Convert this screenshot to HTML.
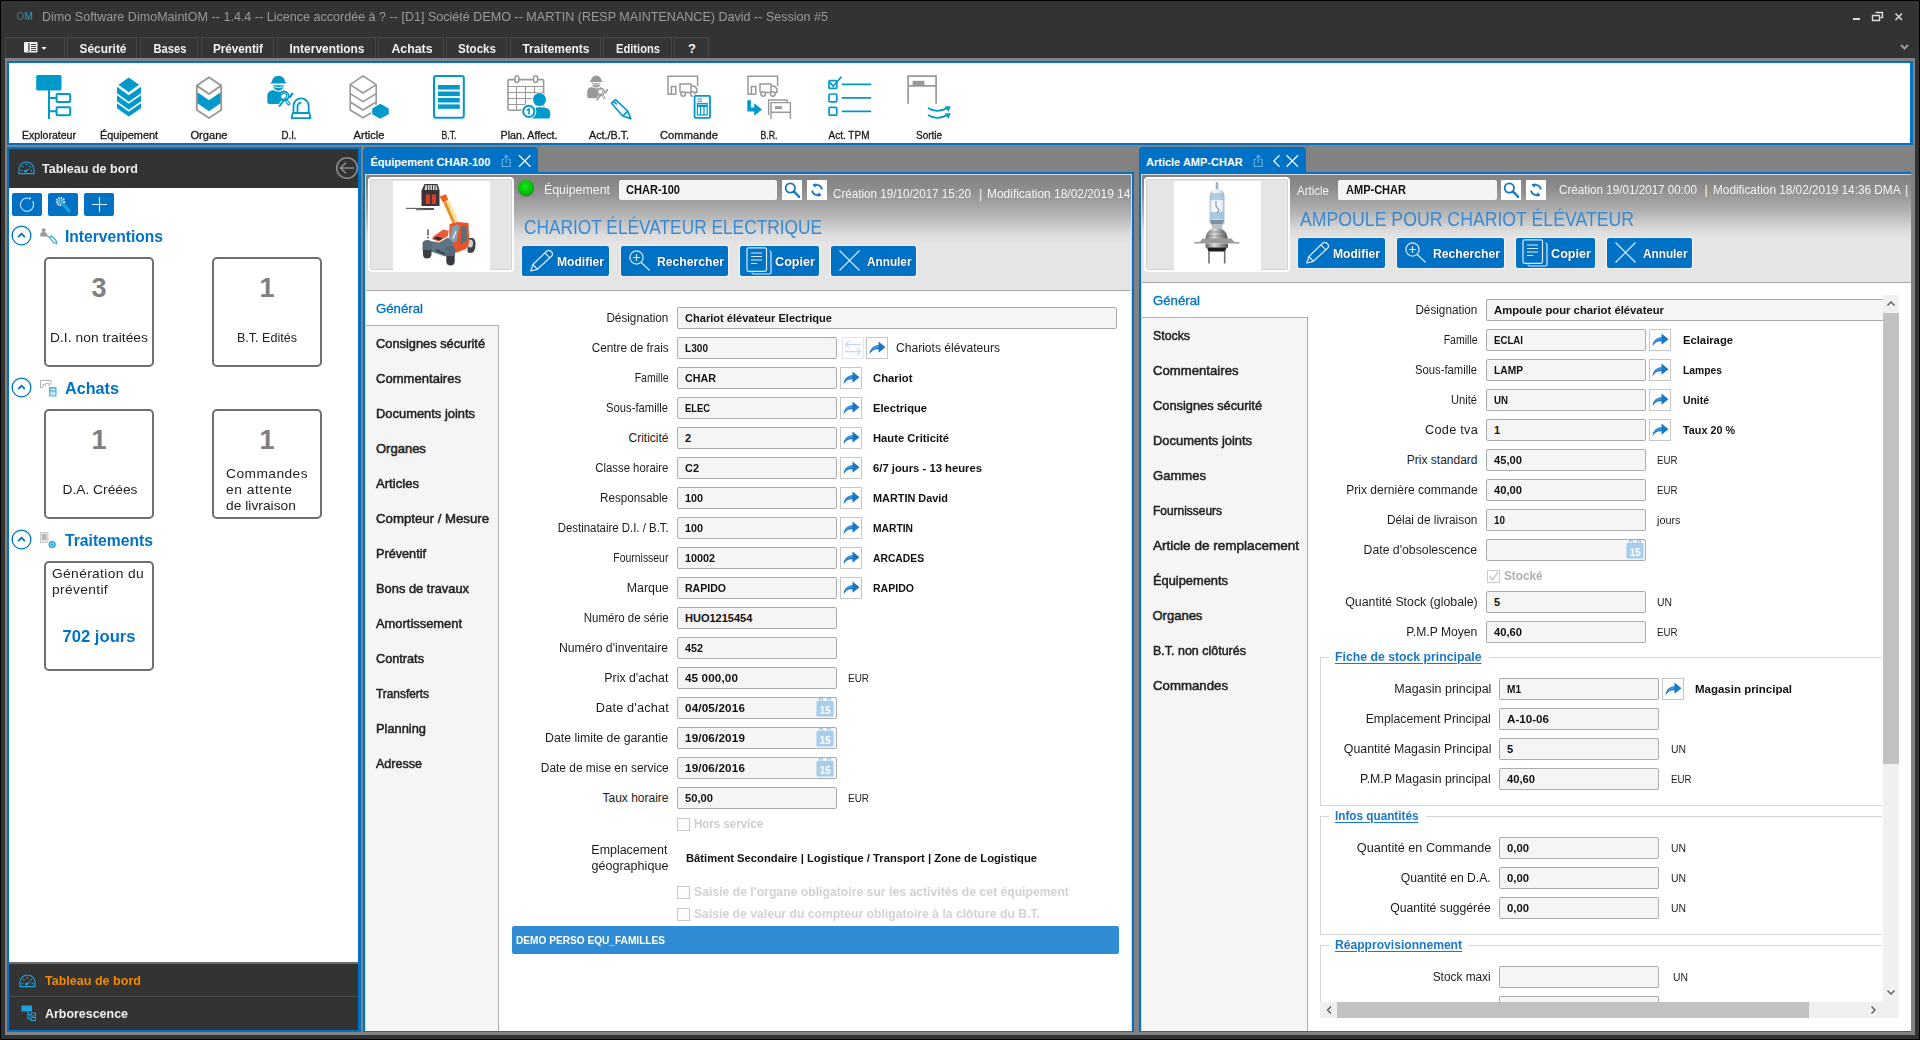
<!DOCTYPE html>
<html lang="fr"><head><meta charset="utf-8"><title>Dimo Software DimoMaintOM</title>
<style>
html,body{margin:0;padding:0;}
body{width:1920px;height:1040px;overflow:hidden;background:#333;position:relative;font-family:"Liberation Sans",sans-serif;}
div{position:absolute;box-sizing:border-box;}
svg{position:absolute;overflow:visible;}
.t{white-space:nowrap;}

.b{background:#0072c6;}

.hdr{background:linear-gradient(#828282 0,#8c8c8c 12%,#b4b4b4 35%,#dcdcdc 52%,#e5e5e5 60%,#e5e5e5 100%);border-bottom:1px solid #a8a8a8;}
.in{background:#f5f5f5;border:1px solid #ababab;border-radius:2px;}
.ab{background:#fff;border:1px solid #c6c6c6;}
.btn{background:#0072c6;border-radius:2px;box-shadow:0 0 0 1px rgba(255,255,255,.55);}
.nav{background:#f5f5f5;border-right:1px solid #ababab;border-top:1px solid #b4b4b4;}

</style></head><body>
<div style="left:0px;top:0px;width:1920px;height:1040px;border:1px solid #000;"></div>
<div class="t" style="left:16.5px;top:10px;font-size:10px;line-height:14px;letter-spacing:0.2px;"><span style="color:#5a6b75">O</span><span style="color:#1aa3c9">M</span></div>
<div class="t" style="top:6.5px;font-size:13px;line-height:19px;color:#9a9a9a;left:42px;transform:scaleX(0.966);transform-origin:0 50%;">Dimo Software DimoMaintOM -- 1.4.4 -- Licence accordée à ? -- [D1] Société DEMO -- MARTIN (RESP MAINTENANCE) David -- Session #5</div>
<svg style="left:1850px;top:8px" width="60" height="18"><rect x="3" y="10" width="7" height="2" fill="#ddd"/><path d="M25.5 4.5h7v5h-2M22.5 7.5h7v5h-7z" fill="none" stroke="#ddd" stroke-width="1.4"/><path d="M45.5 5.5l6.5 6.5M52 5.5l-6.5 6.5" stroke="#ddd" stroke-width="1.5" fill="none"/></svg>
<svg style="left:1900px;top:43px" width="10" height="8"><path d="M1 2l3.5 3.5L8 2" stroke="#999" stroke-width="2" fill="none"/></svg>
<div style="left:5px;top:37px;width:60px;height:23px;background:#353535;border:1px solid #484848;border-bottom:none;"></div>
<div style="left:67px;top:37px;width:70px;height:23px;background:#353535;border:1px solid #484848;border-bottom:none;"></div>
<div class="t" style="top:38.5px;font-size:13px;line-height:19px;color:#f2f2f2;font-weight:bold;left:-397.5px;width:1000px;text-align:center;transform:scaleX(0.916);transform-origin:50% 50%;">Sécurité</div>
<div style="left:140px;top:37px;width:58px;height:23px;background:#353535;border:1px solid #484848;border-bottom:none;"></div>
<div class="t" style="top:38.5px;font-size:13px;line-height:19px;color:#f2f2f2;font-weight:bold;left:-330.5px;width:1000px;text-align:center;transform:scaleX(0.861);transform-origin:50% 50%;">Bases</div>
<div style="left:201px;top:37px;width:73px;height:23px;background:#353535;border:1px solid #484848;border-bottom:none;"></div>
<div class="t" style="top:38.5px;font-size:13px;line-height:19px;color:#f2f2f2;font-weight:bold;left:-262.0px;width:1000px;text-align:center;transform:scaleX(0.899);transform-origin:50% 50%;">Préventif</div>
<div style="left:277px;top:37px;width:99px;height:23px;background:#353535;border:1px solid #484848;border-bottom:none;"></div>
<div class="t" style="top:38.5px;font-size:13px;line-height:19px;color:#f2f2f2;font-weight:bold;left:-173.0px;width:1000px;text-align:center;transform:scaleX(0.919);transform-origin:50% 50%;">Interventions</div>
<div style="left:378px;top:37px;width:66px;height:23px;background:#353535;border:1px solid #484848;border-bottom:none;"></div>
<div class="t" style="top:38.5px;font-size:13px;line-height:19px;color:#f2f2f2;font-weight:bold;left:-88.5px;width:1000px;text-align:center;transform:scaleX(0.946);transform-origin:50% 50%;">Achats</div>
<div style="left:446px;top:37px;width:61px;height:23px;background:#353535;border:1px solid #484848;border-bottom:none;"></div>
<div class="t" style="top:38.5px;font-size:13px;line-height:19px;color:#f2f2f2;font-weight:bold;left:-23.0px;width:1000px;text-align:center;transform:scaleX(0.891);transform-origin:50% 50%;">Stocks</div>
<div style="left:510px;top:37px;width:91px;height:23px;background:#353535;border:1px solid #484848;border-bottom:none;"></div>
<div class="t" style="top:38.5px;font-size:13px;line-height:19px;color:#f2f2f2;font-weight:bold;left:56.0px;width:1000px;text-align:center;transform:scaleX(0.918);transform-origin:50% 50%;">Traitements</div>
<div style="left:603px;top:37px;width:69px;height:23px;background:#353535;border:1px solid #484848;border-bottom:none;"></div>
<div class="t" style="top:38.5px;font-size:13px;line-height:19px;color:#f2f2f2;font-weight:bold;left:138.0px;width:1000px;text-align:center;transform:scaleX(0.858);transform-origin:50% 50%;">Editions</div>
<div style="left:674px;top:37px;width:35px;height:23px;background:#353535;border:1px solid #484848;border-bottom:none;"></div>
<div class="t" style="top:38.5px;font-size:13px;line-height:19px;color:#f2f2f2;font-weight:bold;left:192.0px;width:1000px;text-align:center;">?</div>
<svg style="left:23px;top:41px" width="26" height="14"><rect x="1" y="1" width="13.5" height="10.5" rx="1" fill="#f4f4f4"/><rect x="5.3" y="2" width="1.2" height="8.5" fill="#333"/><path d="M8 3.5h5M8 5.5h5M8 7.5h5M8 9.5h5" stroke="#333" stroke-width="0.9"/><path d="M18.5 6h5l-2.5 3z" fill="#f4f4f4"/></svg>
<div style="left:5px;top:58px;width:1910px;height:89px;background:#828282;"></div>
<div style="left:7px;top:61px;width:1906px;height:84px;background:#0072c6;"></div>
<div style="left:9px;top:63px;width:1901px;height:80px;background:#fff;"></div>
<div style="left:7px;top:147px;width:354px;height:885px;background:#0072c6;"></div>
<div style="left:9px;top:149px;width:349px;height:881px;background:#fff;"></div>
<div style="left:9px;top:149px;width:349px;height:39px;background:#333;"></div>
<div style="left:9px;top:962px;width:349px;height:68px;background:#333;"></div>
<div style="left:9px;top:962px;width:349px;height:1.5px;background:#6a6a6a;"></div>
<div style="left:9px;top:996px;width:349px;height:1px;background:#505050;"></div>
<div style="left:5px;top:147px;width:2px;height:887px;background:#828282;"></div>
<div style="left:361px;top:147px;width:2px;height:887px;background:#828282;"></div>
<div style="left:5px;top:1032px;width:1910px;height:2.5px;background:#828282;"></div>
<div style="left:1134px;top:147px;width:5px;height:887px;background:#828282;"></div>
<div style="left:1911px;top:147px;width:4px;height:887px;background:#828282;"></div>
<div style="left:363px;top:147px;width:771px;height:26px;background:#828282;"></div>
<div style="left:1139px;top:147px;width:772px;height:26px;background:#828282;"></div>
<div style="left:363px;top:172px;width:771px;height:860px;background:#0072c6;"></div>
<div style="left:363px;top:147px;width:175px;height:27px;background:#0072c6;border-radius:4px 4px 0 0;"></div>
<div style="left:365px;top:174px;width:767px;height:857px;background:#fff;border:1px solid #dcdcdc;border-bottom:none;"></div>
<div style="left:1139px;top:172px;width:772px;height:860px;background:#0072c6;"></div>
<div style="left:1139px;top:147px;width:167px;height:27px;background:#0072c6;border-radius:4px 4px 0 0;"></div>
<div style="left:1141px;top:174px;width:770px;height:857px;background:#fff;border:1px solid #dcdcdc;border-bottom:none;border-right:none;"></div>
<svg style="left:27px;top:75px" width="44" height="44" viewBox="0 0 44 44"><rect x="9.2" y="0" width="25.3" height="15.6" rx="1.5" fill="#0099cc"/><path d="M22 15v29M22 23h7M22 36.2h7" stroke="#0099cc" stroke-width="2" fill="none"/><rect x="29.6" y="19" width="13.6" height="8" rx="1" fill="none" stroke="#0099cc" stroke-width="2"/><rect x="29.6" y="32.2" width="13.6" height="8" rx="1" fill="none" stroke="#0099cc" stroke-width="2"/></svg>
<svg style="left:107px;top:75px" width="44" height="44" viewBox="0 0 44 44"><g fill="#0099cc"><path d="M21.75 2.5L32 9.8 21.75 17.2 11.5 9.8z"/><path d="M10 11.8L21.75 20.3 34 11.8V18.3L21.75 26.8 10 18.3z"/><path d="M10 20.3L21.75 28.8 34 20.3V26.3L21.75 34.8 10 26.3z"/><path d="M10 28.3L21.75 36.8 34 28.3V33.3L21.75 41.5 10 33.3z"/></g></svg>
<svg style="left:187px;top:75px" width="44" height="44" viewBox="0 0 44 44"><path d="M9.300 16.600L22 25.300 34.700 16.600V27.600L22 36.300 9.300 27.600z" fill="#0099cc"/><path d="M22 2.200L34.200 10.600V35L22 43 9.800 35V10.600zM9.800 10.600L22 19 34.200 10.600" fill="none" stroke="#999" stroke-width="1.900" stroke-linejoin="round"/></svg>
<svg style="left:267px;top:75px" width="44" height="44" viewBox="0 0 44 44"><g transform="scale(1.0)" fill="#0099cc"><path d="M5 7.2a6.5 6.5 0 0 1 13 0h1.3v1.4H3.7V7.2z"/><path d="M6 10.2h11a5.5 5.5 0 0 1-11 0z"/><path d="M6.2 11.6q5.3 2 10.6 0" stroke="#fff" stroke-width="0.9" fill="none"/><path d="M0.3 27V20.5q0-4.5 6-5.5 5 3.5 10.5 0.3l3.2 1.4-8 12.3H2.3q-2 0-2-2z"/><circle cx="17.2" cy="21" r="4.4" fill="#fff" stroke="#0099cc" stroke-width="1.6"/><path d="M12.5 31l5.5-7" stroke="#0099cc" stroke-width="2" stroke-linecap="round" fill="none"/><path d="M15.2 19.2a2.5 2.5 0 1 1 3.5 3.5l4.3 6.3-1.6 1.2-4.4-6.2a2.5 2.5 0 0 1-1.8-4.8z" stroke="#0099cc" fill="none" stroke-width="1.1"/><path d="M21.5 22.5l2.5-4.2q1.8-1.4 2.8 0.2l-3.6 5z"/></g><path d="M26.5 37.3V31a7.6 7.6 0 0 1 15.2 0v6.3M30.5 37V31.5a3.6 3.6 0 0 1 4-3.8" fill="none" stroke="#0099cc" stroke-width="1.8"/><path d="M25.8 38h16.6l1 5.2H24.6z" fill="none" stroke="#0099cc" stroke-width="1.8" stroke-linejoin="round"/></svg>
<svg style="left:347px;top:75px" width="44" height="44" viewBox="0 0 44 44"><path d="M16 0.8L29.2 9.6V35L16 42.8 3.2 35V9.6zM3.2 9.6L16 18 29.2 9.6M3.2 18.6L16 26.6 29.2 18.6M3.2 27L16 35 29.2 27" fill="none" stroke="#999" stroke-width="1.6" stroke-linejoin="round"/><path d="M33.3 27.6L43 33V39.7L33.3 45 24 39.7V33z" fill="#fff"/><path d="M33.3 28.8L41.7 33.4V39.3L33.3 43.8 25.2 39.3V33.4z" fill="#0099cc"/></svg>
<svg style="left:427px;top:75px" width="44" height="44" viewBox="0 0 44 44"><rect x="7" y="1" width="29.8" height="41.8" rx="2" fill="none" stroke="#0099cc" stroke-width="2"/><g fill="#0099cc"><rect x="11" y="10" width="21.8" height="4.6"/><rect x="11" y="16.5" width="21.8" height="4.6"/><rect x="11" y="22.9" width="21.8" height="4.6"/><rect x="11" y="29.4" width="21.8" height="4.4"/></g></svg>
<svg style="left:507px;top:75px" width="44" height="44" viewBox="0 0 44 44"><g fill="none" stroke="#999"><rect x="1" y="4.6" width="35.6" height="30.6" rx="1" stroke-width="1.6"/><path d="M1 11.5h35.6M1 17.5h35.6M1 23.5h30M1 29.5h22M9.5 11.5v23.7M18.5 11.5v23.7M27.5 11.5v12" stroke-width="1.1"/><rect x="8" y="0.8" width="3.8" height="6.6" rx="1.9" fill="#fff" stroke-width="1.5"/><rect x="26.7" y="0.8" width="3.8" height="6.6" rx="1.9" fill="#fff" stroke-width="1.5"/></g><circle cx="32.5" cy="24.6" r="7.4" fill="#fff"/><circle cx="32.5" cy="24.6" r="6.5" fill="#0099cc"/><path d="M23.5 44.6V37.5q0-6.3 9-6.3 11.5 0 11.5 6.3v4.2q0 2.6-2.5 2.6z" fill="#fff"/><path d="M25 43.6v-6q0-5.4 7.6-5.4 10.6 0 10.6 5.4v3.6q0 2.4-2.4 2.4z" fill="#0099cc"/><circle cx="21.8" cy="36.4" r="7.6" fill="#fff"/><circle cx="21.8" cy="36.4" r="5.6" fill="#fff" stroke="#0099cc" stroke-width="2"/><path d="M19.8 35.2l2.3-1.2v5.6" fill="none" stroke="#0099cc" stroke-width="1.6"/></svg>
<svg style="left:587px;top:75px" width="44" height="44" viewBox="0 0 44 44"><g transform="scale(0.8)" fill="#999"><path d="M5 7.2a6.5 6.5 0 0 1 13 0h1.3v1.4H3.7V7.2z"/><path d="M6 10.2h11a5.5 5.5 0 0 1-11 0z"/><path d="M6.2 11.6q5.3 2 10.6 0" stroke="#fff" stroke-width="0.9" fill="none"/><path d="M0.3 27V20.5q0-4.5 6-5.5 5 3.5 10.5 0.3l3.2 1.4-8 12.3H2.3q-2 0-2-2z"/><circle cx="17.2" cy="21" r="4.4" fill="#fff" stroke="#999" stroke-width="1.6"/><path d="M12.5 31l5.5-7" stroke="#999" stroke-width="2" stroke-linecap="round" fill="none"/><path d="M15.2 19.2a2.5 2.5 0 1 1 3.5 3.5l4.3 6.3-1.6 1.2-4.4-6.2a2.5 2.5 0 0 1-1.8-4.8z" stroke="#999" fill="none" stroke-width="1.1"/><path d="M21.5 22.5l2.5-4.2q1.8-1.4 2.8 0.2l-3.6 5z"/></g><path d="M24.5 28.2l4-3.6 12.2 11.4 3 7.6-8-2.6zM35.8 41l5-4.8M26.6 26.4l3.2 3" fill="none" stroke="#0099cc" stroke-width="1.7" stroke-linejoin="round"/></svg>
<svg style="left:667px;top:75px" width="44" height="44" viewBox="0 0 44 44"><g fill="none" stroke="#999" stroke-width="1.5"><path d="M8.8 19.2H1V1.2h29.6v10M8.8 19.4V11.5H4.4v7.7"/><path d="M13 17.2V9h11v8.2M24 11h3.4l2.6 3v3.4h-2.3M18.4 17.4h5.2M13 17.4h1"/><circle cx="16.2" cy="19" r="2.2" fill="#fff"/><circle cx="25.8" cy="19" r="2.2" fill="#fff"/></g><rect x="26" y="19.2" width="19" height="25.5" fill="#fff"/><rect x="27.6" y="20.8" width="15.4" height="22" rx="1" fill="none" stroke="#0099cc" stroke-width="1.8"/><path d="M30.5 24h4.5M30.5 26.2h4.5" stroke="#0099cc" stroke-width="1"/><rect x="30.4" y="28.5" width="9.8" height="11.5" fill="none" stroke="#0099cc" stroke-width="1.2"/><path d="M30.4 30.8h9.8" stroke="#0099cc" stroke-width="2.4"/><path d="M33.6 30v10M37 30v10" stroke="#0099cc" stroke-width="1.2"/></svg>
<svg style="left:747px;top:75px" width="44" height="44" viewBox="0 0 44 44"><g fill="none" stroke="#999" stroke-width="1.5"><path d="M8.8 19.2H1V1.2h29.6v10M8.8 19.4V11.5H4.4v7.7"/><path d="M13 17.2V9h11v8.2M24 11h3.4l2.6 3v3.4h-2.3M18.4 17.4h5.2M13 17.4h1"/><circle cx="16.2" cy="19" r="2.2" fill="#fff"/><circle cx="25.8" cy="19" r="2.2" fill="#fff"/></g><path d="M0.3 25.3h3.6v7.2h3.3v-4.3l7.8 6.3-7.8 6.3v-4.3H0.3z" fill="#0099cc"/><g fill="none" stroke="#999" stroke-width="1.4"><path d="M21.6 40V25h18.6v2.4"/><path d="M24 44V27.6h19.4V44M24 37.2h19.4"/></g><rect x="28" y="31.2" width="7" height="2.9" fill="#999"/></svg>
<svg style="left:827px;top:75px" width="44" height="44" viewBox="0 0 44 44"><g fill="none" stroke="#0099cc" stroke-width="1.7"><rect x="2" y="5.6" width="7.8" height="7.8" rx="1"/><rect x="2" y="19" width="7.8" height="7.8" rx="1"/><rect x="2" y="32.4" width="7.8" height="7.8" rx="1"/><path d="M15.5 9.4h28M15.5 22.9h28M15.5 36.3h28M3 7.6l3.2 3.6 7.8-9" stroke-linecap="round"/></g></svg>
<svg style="left:907px;top:75px" width="44" height="44" viewBox="0 0 44 44"><g fill="none" stroke="#999" stroke-width="1.7"><path d="M1.1 28.8V1.2h28v27.6M1.1 10.8h28"/></g><rect x="5.6" y="5.8" width="11.8" height="4.4" fill="#999"/><g fill="none" stroke="#0099cc" stroke-width="1.8"><path d="M21 33q9 6 20-0.5M21 40q9 6 20-0.5"/></g><path d="M37.5 31.6l6.2-0.4-2.2 5.6zM37.5 38.6l6.2-0.4-2.2 5.6z" fill="#0099cc"/></svg>
<div class="t" style="top:127.2px;font-size:10.5px;line-height:16.5px;color:#1a1a1a;left:-451.0px;width:1000px;text-align:center;transform:scaleX(1.006);transform-origin:50% 50%;-webkit-text-stroke:0.300px #1a1a1a;">Explorateur</div>
<div class="t" style="top:127.2px;font-size:10.5px;line-height:16.5px;color:#1a1a1a;left:-371.0px;width:1000px;text-align:center;transform:scaleX(1.035);transform-origin:50% 50%;-webkit-text-stroke:0.300px #1a1a1a;">Équipement</div>
<div class="t" style="top:127.2px;font-size:10.5px;line-height:16.5px;color:#1a1a1a;left:-291.0px;width:1000px;text-align:center;transform:scaleX(1.057);transform-origin:50% 50%;-webkit-text-stroke:0.300px #1a1a1a;">Organe</div>
<div class="t" style="top:127.2px;font-size:10.5px;line-height:16.5px;color:#1a1a1a;left:-211.0px;width:1000px;text-align:center;transform:scaleX(0.918);transform-origin:50% 50%;-webkit-text-stroke:0.300px #1a1a1a;">D.I.</div>
<div class="t" style="top:127.2px;font-size:10.5px;line-height:16.5px;color:#1a1a1a;letter-spacing:0.01px;left:-131.0px;width:1000px;text-align:center;transform:scaleX(1.060);transform-origin:50% 50%;-webkit-text-stroke:0.300px #1a1a1a;">Article</div>
<div class="t" style="top:127.2px;font-size:10.5px;line-height:16.5px;color:#1a1a1a;left:-51.0px;width:1000px;text-align:center;transform:scaleX(0.829);transform-origin:50% 50%;-webkit-text-stroke:0.300px #1a1a1a;">B.T.</div>
<div class="t" style="top:127.2px;font-size:10.5px;line-height:16.5px;color:#1a1a1a;left:29.0px;width:1000px;text-align:center;transform:scaleX(1.021);transform-origin:50% 50%;-webkit-text-stroke:0.300px #1a1a1a;">Plan. Affect.</div>
<div class="t" style="top:127.2px;font-size:10.5px;line-height:16.5px;color:#1a1a1a;left:109.0px;width:1000px;text-align:center;transform:scaleX(1.023);transform-origin:50% 50%;-webkit-text-stroke:0.300px #1a1a1a;">Act./B.T.</div>
<div class="t" style="top:127.2px;font-size:10.5px;line-height:16.5px;color:#1a1a1a;letter-spacing:0.06px;left:189.0px;width:1000px;text-align:center;transform:scaleX(1.060);transform-origin:50% 50%;-webkit-text-stroke:0.300px #1a1a1a;">Commande</div>
<div class="t" style="top:127.2px;font-size:10.5px;line-height:16.5px;color:#1a1a1a;left:269.0px;width:1000px;text-align:center;transform:scaleX(0.833);transform-origin:50% 50%;-webkit-text-stroke:0.300px #1a1a1a;">B.R.</div>
<div class="t" style="top:127.2px;font-size:10.5px;line-height:16.5px;color:#1a1a1a;left:349.0px;width:1000px;text-align:center;transform:scaleX(0.954);transform-origin:50% 50%;-webkit-text-stroke:0.300px #1a1a1a;">Act. TPM</div>
<div class="t" style="top:127.2px;font-size:10.5px;line-height:16.5px;color:#1a1a1a;left:429.0px;width:1000px;text-align:center;transform:scaleX(0.948);transform-origin:50% 50%;-webkit-text-stroke:0.300px #1a1a1a;">Sortie</div>
<svg style="left:18px;top:161px" width="17" height="14" viewBox="0 0 17 14"><path d="M1 12.6V8.5a7.5 7.5 0 0 1 15 0v4.1z" fill="none" stroke="#1aa3dc" stroke-width="1.2" stroke-linejoin="round"/><g fill="#1aa3dc"><circle cx="3.6" cy="9.6" r="0.9"/><circle cx="4.8" cy="5.6" r="0.9"/><circle cx="8.5" cy="3.6" r="0.9"/><circle cx="12.2" cy="5.6" r="0.9"/><circle cx="13.4" cy="9.6" r="0.9"/><circle cx="7.4" cy="10.2" r="1.4"/></g><path d="M7.4 10.2l4.2-2.6" stroke="#1aa3dc" stroke-width="1.1"/></svg>
<div class="t" style="top:159.0px;font-size:13px;line-height:19px;color:#ececec;font-weight:bold;left:42px;transform:scaleX(0.965);transform-origin:0 50%;">Tableau de bord</div>
<svg style="left:335px;top:156px" width="24" height="24" viewBox="0 0 24 24"><circle cx="12" cy="12" r="10.3" fill="none" stroke="#8a8a8a" stroke-width="1.6"/><path d="M19 12H6M11 6.5L5.5 12l5.500 5.500" fill="none" stroke="#8a8a8a" stroke-width="1.6"/></svg>
<div style="left:12px;top:193px;width:30px;height:23px;background:#0072c6;border-radius:2px;"></div>
<div style="left:48px;top:193px;width:30px;height:23px;background:#0072c6;border-radius:2px;"></div>
<div style="left:84px;top:193px;width:30px;height:23px;background:#0072c6;border-radius:2px;"></div>
<svg style="left:12px;top:193px" width="30" height="23" viewBox="0 0 30 23"><path d="M17.5 5.6a6.6 6.6 0 1 1-5 0" fill="none" stroke="#cfe6f7" stroke-width="1.1" transform="rotate(35 15 11.7)"/><path d="M16.6 4.3l2.8 0.600-2 2z" fill="#cfe6f7"/></svg>
<svg style="left:48px;top:193px" width="30" height="23" viewBox="0 0 30 23"><circle cx="12.500" cy="8.5" r="3.6" fill="none" stroke="#e6f2fb" stroke-width="2.2" stroke-dasharray="1.4 1"/><circle cx="12.5" cy="8.5" r="1.600" fill="none" stroke="#e6f2fb" stroke-width="0.9"/><path d="M15.5 11.500l5.500 6.500" stroke="#1aa3dc" stroke-width="3.4" stroke-linecap="round"/></svg>
<svg style="left:84px;top:193px" width="30" height="23" viewBox="0 0 30 23"><path d="M8 11.500h15M15.500 4v15" stroke="#e6f2fb" stroke-width="1.100"/></svg>
<svg style="left:11px;top:224.7px" width="21" height="21" viewBox="0 0 21 21"><circle cx="10.500" cy="10.5" r="9.400" fill="#fff" stroke="#0072c6" stroke-width="1.300"/><path d="M7.200 12l3.300-3.300 3.300 3.300" fill="none" stroke="#0072c6" stroke-width="1.800"/></svg>
<div class="t" style="top:224.5px;font-size:17px;line-height:23px;color:#0072c6;font-weight:bold;left:65px;transform:scaleX(0.918);transform-origin:0 50%;">Interventions</div>
<svg style="left:40px;top:228px" width="17" height="17" viewBox="0 0 17 17"><circle cx="3.600" cy="2.200" r="1.900" fill="#999"/><path d="M0.300 8.500V6q0-2 3.300-2t3.300 2v2.500z" fill="#999"/><path d="M6 6.500l3 2.500" stroke="#999" stroke-width="1.500"/><path d="M9.500 9.500l2-1.500 4.500 4.500 0.700 3-3-0.700z" fill="#fff" stroke="#1aa3dc" stroke-width="1.100"/></svg>
<svg style="left:11px;top:376.7px" width="21" height="21" viewBox="0 0 21 21"><circle cx="10.500" cy="10.5" r="9.400" fill="#fff" stroke="#0072c6" stroke-width="1.300"/><path d="M7.200 12l3.300-3.300 3.300 3.300" fill="none" stroke="#0072c6" stroke-width="1.800"/></svg>
<div class="t" style="top:376.5px;font-size:17px;line-height:23px;color:#0072c6;font-weight:bold;left:65px;transform:scaleX(0.953);transform-origin:0 50%;">Achats</div>
<svg style="left:40px;top:380px" width="17" height="17" viewBox="0 0 17 17"><path d="M3 7.500H0.500V0.500h10.500V5M3 7.500V4.500h1.500M5.500 6.500V3.500h3.500v3" fill="none" stroke="#aaa" stroke-width="0.900"/><rect x="9.500" y="7.500" width="6.500" height="8.500" fill="#7cc6e4" stroke="#4fb2d8" stroke-width="1"/><path d="M11.200 9.500h1.200M13.200 9.500h1.600M11.200 12v3.500M13 12v3.500M14.600 12v3.500" stroke="#fff" stroke-width="0.900"/></svg>
<svg style="left:11px;top:528.7px" width="21" height="21" viewBox="0 0 21 21"><circle cx="10.500" cy="10.5" r="9.400" fill="#fff" stroke="#0072c6" stroke-width="1.300"/><path d="M7.200 12l3.300-3.300 3.300 3.300" fill="none" stroke="#0072c6" stroke-width="1.800"/></svg>
<div class="t" style="top:528.5px;font-size:17px;line-height:23px;color:#0072c6;font-weight:bold;left:65px;transform:scaleX(0.922);transform-origin:0 50%;">Traitements</div>
<svg style="left:40px;top:532px" width="17" height="17" viewBox="0 0 17 17"><rect x="0.500" y="0.500" width="7.500" height="10" fill="#e6e6e6" stroke="#bbb" stroke-width="0.700"/><path d="M2 3h4.500M2 5h4.500M2 7h4.500" stroke="#888" stroke-width="1"/><circle cx="12.200" cy="12.500" r="3.600" fill="#1aa3dc"/><circle cx="12.200" cy="12.500" r="1.700" fill="none" stroke="#fff" stroke-width="0.700"/></svg>
<div style="left:44px;top:257px;width:110px;height:110px;border:2px solid #707070;border-radius:5px;background:#fff;"></div>
<div style="left:212px;top:257px;width:110px;height:110px;border:2px solid #707070;border-radius:5px;background:#fff;"></div>
<div style="left:44px;top:409px;width:110px;height:110px;border:2px solid #707070;border-radius:5px;background:#fff;"></div>
<div style="left:212px;top:409px;width:110px;height:110px;border:2px solid #707070;border-radius:5px;background:#fff;"></div>
<div style="left:44px;top:561px;width:110px;height:110px;border:2px solid #707070;border-radius:5px;background:#fff;"></div>
<div class="t" style="top:271.8px;font-size:27px;line-height:33px;color:#808080;font-weight:bold;left:-401.0px;width:1000px;text-align:center;">3</div>
<div class="t" style="top:271.8px;font-size:27px;line-height:33px;color:#808080;font-weight:bold;left:-233.0px;width:1000px;text-align:center;">1</div>
<div class="t" style="top:423.8px;font-size:27px;line-height:33px;color:#808080;font-weight:bold;left:-401.0px;width:1000px;text-align:center;">1</div>
<div class="t" style="top:423.8px;font-size:27px;line-height:33px;color:#808080;font-weight:bold;left:-233.0px;width:1000px;text-align:center;">1</div>
<div class="t" style="top:328.0px;font-size:13px;line-height:19px;color:#222;letter-spacing:0.04px;left:-401.0px;width:1000px;text-align:center;transform:scaleX(1.060);transform-origin:50% 50%;">D.I. non traitées</div>
<div class="t" style="top:328.0px;font-size:13px;line-height:19px;color:#222;left:-233.0px;width:1000px;text-align:center;transform:scaleX(0.966);transform-origin:50% 50%;">B.T. Edités</div>
<div class="t" style="top:480.0px;font-size:13px;line-height:19px;color:#222;left:-400.5px;width:1000px;text-align:center;transform:scaleX(1.059);transform-origin:50% 50%;">D.A. Créées</div>
<div class="t" style="top:464.0px;font-size:13px;line-height:19px;color:#222;letter-spacing:0.41px;left:226px;transform:scaleX(1.060);transform-origin:0 50%;">Commandes</div>
<div class="t" style="top:480.0px;font-size:13px;line-height:19px;color:#222;letter-spacing:0.49px;left:226px;transform:scaleX(1.060);transform-origin:0 50%;">en attente</div>
<div class="t" style="top:496.0px;font-size:13px;line-height:19px;color:#222;letter-spacing:0.02px;left:226px;transform:scaleX(1.060);transform-origin:0 50%;">de livraison</div>
<div class="t" style="top:564.0px;font-size:13px;line-height:19px;color:#222;letter-spacing:0.34px;left:52px;transform:scaleX(1.060);transform-origin:0 50%;">Génération du</div>
<div class="t" style="top:580.0px;font-size:13px;line-height:19px;color:#222;letter-spacing:0.33px;left:52px;transform:scaleX(1.060);transform-origin:0 50%;">préventif</div>
<div class="t" style="top:625.0px;font-size:17px;line-height:23px;color:#0072c6;font-weight:bold;left:-401.0px;width:1000px;text-align:center;transform:scaleX(0.978);transform-origin:50% 50%;">702 jours</div>
<svg style="left:19px;top:973.5px" width="17" height="14" viewBox="0 0 17 14"><path d="M1 12.6V8.5a7.5 7.5 0 0 1 15 0v4.1z" fill="none" stroke="#1aa3dc" stroke-width="1.2" stroke-linejoin="round"/><g fill="#1aa3dc"><circle cx="3.6" cy="9.6" r="0.9"/><circle cx="4.8" cy="5.6" r="0.9"/><circle cx="8.5" cy="3.6" r="0.9"/><circle cx="12.2" cy="5.6" r="0.9"/><circle cx="13.4" cy="9.6" r="0.9"/><circle cx="7.4" cy="10.2" r="1.4"/></g><path d="M7.4 10.2l4.2-2.6" stroke="#1aa3dc" stroke-width="1.1"/></svg>
<div class="t" style="top:971.0px;font-size:13px;line-height:19px;color:#f28a00;font-weight:bold;left:45px;transform:scaleX(0.965);transform-origin:0 50%;">Tableau de bord</div>
<svg style="left:21px;top:1005px" width="16" height="17" viewBox="0 0 16 17"><rect x="0.500" y="0.500" width="10.500" height="6" fill="#1aa3dc"/><path d="M7 6.500v7.500M7 9.500h3M7 14h3" stroke="#1aa3dc" stroke-width="1.200" fill="none"/><rect x="10" y="8" width="4.500" height="3" fill="none" stroke="#1aa3dc" stroke-width="1"/><rect x="10" y="12.500" width="4.500" height="3" fill="none" stroke="#1aa3dc" stroke-width="1"/></svg>
<div class="t" style="top:1004.0px;font-size:13px;line-height:19px;color:#f0f0f0;font-weight:bold;left:45px;transform:scaleX(0.957);transform-origin:0 50%;">Arborescence</div>
<div class="t" style="top:153.5px;font-size:11px;line-height:17px;color:#fff;font-weight:bold;left:370.5px;">Équipement CHAR-100</div>
<svg style="left:500.5px;top:153.7px" width="46" height="14" viewBox="0 0 46 14"><path d="M3 5.500H1.200V12.500H9.200V5.500H7.400" fill="none" stroke="#6fb1e4" stroke-width="1.100"/><path d="M5.200 9V1.500M3.200 3.500l2-2.200 2 2.200" fill="none" stroke="#6fb1e4" stroke-width="1.100"/><path d="M18 1.200l11.500 11.500M29.5 1.200L18 12.700" fill="none" stroke="#f4f9fd" stroke-width="1.300"/></svg>
<div class="hdr" style="left:366px;top:175px;width:765px;height:116px"></div>
<div style="left:368px;top:177px;width:146px;height:95px;background:#e5e5e5;border:2px solid #fff;border-radius:4px;box-shadow:inset 0 0 0 1px #d2d2d2;"></div>
<div style="left:392.5px;top:180.5px;width:97px;height:89px;background:#fff;"></div>
<svg style="left:392px;top:180px" width="98" height="90" viewBox="392 180 98 90">
<defs><filter id="bl"><feGaussianBlur stdDeviation="0.55"/></filter></defs><g filter="url(#bl)">
<path d="M406 208.300l28 0.300M416 209.800l18-0.400" stroke="#3a3a3a" stroke-width="0.900"/>
<path d="M424.500 184h13l2 6.500v15.500h-18v-15.500z" fill="#3b3536"/>
<path d="M425.500 185h11l1 5h-13z" fill="#d8d8d8"/><path d="M427.500 184.500v6M430 184.500v6M432.500 184.500v6M435 184.500v6" stroke="#3b3536" stroke-width="0.900"/>
<rect x="425.800" y="194.500" width="4.200" height="9.500" fill="#e03a2c"/><rect x="431.800" y="194.500" width="4.200" height="9.500" fill="#e03a2c"/>
<path d="M439.500 196.500l6.500-2.200 2.200 5.500-5 3z" fill="#e8641f"/>
<path d="M443.200 202.200l5.800-2.400 9.600 21.800-6.200 1.200z" fill="#f6e5a0"/><path d="M443.200 202.200l2.800-1.200 9.200 21.400-2.800 0.600z" fill="#e8902c"/>
<path d="M472 238q3 0 3.500 5t-2 9q-3 2-6 0v-14z" fill="#3e4349"/><ellipse cx="470.300" cy="243.500" rx="2.700" ry="4" fill="#d2d2d2"/>
<path d="M449.500 224l8-2 11 1 0.800 20-3.300 6-11 4-6-3z" fill="#e8532c"/>
<path d="M451.500 226.500l6-2 2 1-3 16-7 2z" fill="#7f9eb2"/><path d="M461.500 226l5 0.500 0.500 14-6.500 4z" fill="#5a6d7c"/><path d="M456 231l-3 8" stroke="#dbe7ee" stroke-width="1.500"/>
<path d="M432.500 237l10.800-7.500 5.500 1.300-1 5.200-9 5.500-6.300-2z" fill="#e85c3c"/><path d="M433.500 238.500l6 2 3-2.200-5.500-1.800z" fill="#2e2e2e"/>
<path d="M431 241l8 1.500 9-5 5 5v10l-8 4-14-5z" fill="#5f7682"/><path d="M436 250l9 4" stroke="#39454e" stroke-width="2"/>
<path d="M422.500 243q1-3 5-3t4.500 3.500v7h-9.500z" fill="#566a7c"/><path d="M423 250h8.500v5q-1 3.500-4.500 3.500t-4-3.500z" fill="#3a3f45"/>
<path d="M446 249q0.500-3.500 4.500-3.500t4.500 3.500v7h-9z" fill="#566a7c"/><path d="M446.300 256h8.400v6q-0.700 3.500-4.200 3.500t-4.200-3.500z" fill="#363b41"/>
<path d="M428 229.500v9" stroke="#444" stroke-width="1.400"/><circle cx="428" cy="236" r="1.100" fill="#eee"/>
</g></svg>
<div style="left:518px;top:180px;width:16px;height:16px;border-radius:50%;background:radial-gradient(circle at 45% 40%,#18e818 0,#08c808 45%,#067a06 100%);box-shadow:0 1px 1px rgba(0,0,0,.25)"></div>
<div class="t" style="top:180.0px;font-size:13px;line-height:19px;color:#f2f2f2;left:544px;transform:scaleX(0.951);transform-origin:0 50%;">Équipement</div>
<div style="left:619px;top:180px;width:158px;height:20px;background:#f4f4f4;border-radius:2px;"></div>
<div class="t" style="top:180.5px;font-size:12px;line-height:18px;color:#111;font-weight:bold;left:626px;transform:scaleX(0.920);transform-origin:0 50%;">CHAR-100</div>
<div style="left:782px;top:180px;width:20px;height:20px;background:#fff;"></div>
<svg style="left:782px;top:180px" width="20" height="20"><circle cx="8.300" cy="8" r="4.700" fill="none" stroke="#1474c4" stroke-width="1.700"/><path d="M11.800 11.500l5.200 5.400" stroke="#1474c4" stroke-width="2.600" stroke-linecap="round"/><path d="M12.300 13.200l3.800 4" stroke="#9cc8ec" stroke-width="0.800"/></svg>
<div style="left:807px;top:180px;width:20px;height:20px;background:#fff;"></div>
<svg style="left:807px;top:180px" width="20" height="20"><g fill="none" stroke="#1474c4" stroke-width="1.800"><path d="M14.800 9.500a4.800 4.800 0 0 0-7.600-3.600M5.200 10.500a4.800 4.800 0 0 0 7.600 3.600"/></g><path d="M9.500 3.200l-4 1.300 2.600 3.200zM10.500 16.800l4-1.300-2.600-3.200z" fill="#1474c4"/></svg>
<div class="t" style="top:185.0px;font-size:12px;line-height:18px;color:#f4f4f4;left:833px;transform:scaleX(0.971);transform-origin:0 50%;">Création 19/10/2017 15:20</div>
<div class="t" style="top:185.0px;font-size:12px;line-height:18px;color:#f4f4f4;left:979px;">|</div>
<div style="left:987px;top:184px;width:144px;height:20px;overflow:hidden">
<div class="t" style="top:1.0px;font-size:12px;line-height:18px;color:#f4f4f4;left:0px;transform:scaleX(0.995);transform-origin:0 50%;">Modification 18/02/2019 14:36</div>
</div>
<div class="t" style="top:213.5px;font-size:20px;line-height:26px;color:#3a8ad2;left:523.5px;transform:scaleX(0.865);transform-origin:0 50%;">CHARIOT ÉLÉVATEUR ELECTRIQUE</div>
<div class="btn" style="left:522px;top:246px;width:87px;height:30px"></div>
<svg style="left:522px;top:246px" width="40" height="30" viewBox="0 0 40 30"><path d="M8.800 25l2.100-6.500L25.200 4.800q2.800-1.200 4.600 1.400 1.600 2.400-0.300 4L15.400 23.300zM10.900 18.500l4.500 4.800M23 6.900l4.600 4.800" fill="none" stroke="#d9ebf8" stroke-width="1.200" stroke-linejoin="round"/></svg>
<div class="t" style="top:251.8px;font-size:13px;line-height:19px;color:#fff;font-weight:bold;left:557px;transform:scaleX(0.930);transform-origin:0 50%;text-shadow:0 0 2px rgba(0,30,70,.7);">Modifier</div>
<div class="btn" style="left:621px;top:246px;width:107px;height:30px"></div>
<svg style="left:621px;top:246px" width="40" height="30" viewBox="0 0 40 30"><circle cx="15.500" cy="11.500" r="6.600" fill="none" stroke="#d9ebf8" stroke-width="1.200"/><path d="M20.300 16.500l8.300 8M12 11.500h7M15.500 8v7" fill="none" stroke="#d9ebf8" stroke-width="1.200"/></svg>
<div class="t" style="top:251.8px;font-size:13px;line-height:19px;color:#fff;font-weight:bold;left:656.5px;transform:scaleX(0.937);transform-origin:0 50%;text-shadow:0 0 2px rgba(0,30,70,.7);">Rechercher</div>
<div class="btn" style="left:740px;top:246px;width:79px;height:30px"></div>
<svg style="left:740px;top:246px" width="40" height="30" viewBox="0 0 40 30"><g fill="none" stroke="#d9ebf8" stroke-width="1.200"><path d="M12 26.500q0 1.500 1.500 1.500h16q1.500 0 1.500-1.500V6.500q0-1.500-1.500-1.500"/><rect x="7" y="1.800" width="19.500" height="23.500" rx="1.500" fill="#0072c6"/><path d="M11 7h11M11 10.500h11M11 14h11M11 17.500h6"/></g></svg>
<div class="t" style="top:251.8px;font-size:13px;line-height:19px;color:#fff;font-weight:bold;left:775px;transform:scaleX(0.972);transform-origin:0 50%;text-shadow:0 0 2px rgba(0,30,70,.7);">Copier</div>
<div class="btn" style="left:831px;top:246px;width:85px;height:30px"></div>
<svg style="left:831px;top:246px" width="40" height="30" viewBox="0 0 40 30"><path d="M8.500 4.500l20 20M28.500 4.500l-20 20" fill="none" stroke="#d9ebf8" stroke-width="1.200"/></svg>
<div class="t" style="top:251.8px;font-size:13px;line-height:19px;color:#fff;font-weight:bold;left:866.5px;transform:scaleX(0.906);transform-origin:0 50%;text-shadow:0 0 2px rgba(0,30,70,.7);">Annuler</div>
<div class="nav" style="left:366px;top:325px;width:133px;height:706px"></div>
<div class="t" style="top:299.0px;font-size:13px;line-height:19px;color:#0072c6;left:376px;transform:scaleX(1.016);transform-origin:0 50%;-webkit-text-stroke:0.300px #0072c6;">Général</div>
<div class="t" style="top:334.0px;font-size:13px;line-height:19px;color:#222;left:376px;transform:scaleX(0.986);transform-origin:0 50%;-webkit-text-stroke:0.500px #222;">Consignes sécurité</div>
<div class="t" style="top:369.0px;font-size:13px;line-height:19px;color:#222;left:376px;transform:scaleX(1.006);transform-origin:0 50%;-webkit-text-stroke:0.500px #222;">Commentaires</div>
<div class="t" style="top:404.0px;font-size:13px;line-height:19px;color:#222;left:376px;transform:scaleX(0.993);transform-origin:0 50%;-webkit-text-stroke:0.500px #222;">Documents joints</div>
<div class="t" style="top:439.0px;font-size:13px;line-height:19px;color:#222;left:376px;-webkit-text-stroke:0.500px #222;">Organes</div>
<div class="t" style="top:474.0px;font-size:13px;line-height:19px;color:#222;left:376px;transform:scaleX(1.009);transform-origin:0 50%;-webkit-text-stroke:0.500px #222;">Articles</div>
<div class="t" style="top:509.0px;font-size:13px;line-height:19px;color:#222;left:376px;transform:scaleX(1.016);transform-origin:0 50%;-webkit-text-stroke:0.500px #222;">Compteur / Mesure</div>
<div class="t" style="top:544.0px;font-size:13px;line-height:19px;color:#222;left:376px;transform:scaleX(0.975);transform-origin:0 50%;-webkit-text-stroke:0.500px #222;">Préventif</div>
<div class="t" style="top:579.0px;font-size:13px;line-height:19px;color:#222;left:376px;transform:scaleX(0.990);transform-origin:0 50%;-webkit-text-stroke:0.500px #222;">Bons de travaux</div>
<div class="t" style="top:614.0px;font-size:13px;line-height:19px;color:#222;left:376px;transform:scaleX(0.992);transform-origin:0 50%;-webkit-text-stroke:0.500px #222;">Amortissement</div>
<div class="t" style="top:649.0px;font-size:13px;line-height:19px;color:#222;left:376px;transform:scaleX(0.977);transform-origin:0 50%;-webkit-text-stroke:0.500px #222;">Contrats</div>
<div class="t" style="top:684.0px;font-size:13px;line-height:19px;color:#222;left:376px;transform:scaleX(0.913);transform-origin:0 50%;-webkit-text-stroke:0.500px #222;">Transferts</div>
<div class="t" style="top:719.0px;font-size:13px;line-height:19px;color:#222;left:376px;transform:scaleX(0.988);transform-origin:0 50%;-webkit-text-stroke:0.500px #222;">Planning</div>
<div class="t" style="top:754.0px;font-size:13px;line-height:19px;color:#222;left:376px;transform:scaleX(0.965);transform-origin:0 50%;-webkit-text-stroke:0.500px #222;">Adresse</div>
<div class="t" style="top:309.0px;font-size:12px;line-height:18px;color:#1c1c1c;right:1251.5px;transform:scaleX(0.978);transform-origin:100% 50%;">Désignation</div>
<div class="in" style="left:677px;top:307px;width:440px;height:22px"></div>
<div class="t" style="top:309.5px;font-size:11px;line-height:17px;color:#111;font-weight:bold;left:685px;transform:scaleX(1.006);transform-origin:0 50%;">Chariot élévateur Electrique</div>
<div class="t" style="top:339.0px;font-size:12px;line-height:18px;color:#1c1c1c;right:1251.5px;transform:scaleX(0.978);transform-origin:100% 50%;">Centre de frais</div>
<div class="in" style="left:677px;top:337px;width:160px;height:22px"></div>
<div class="t" style="top:339.5px;font-size:11px;line-height:17px;color:#111;font-weight:bold;left:685px;transform:scaleX(0.917);transform-origin:0 50%;">L300</div>
<div style="left:842px;top:337px;width:22px;height:22px;border:1px solid #e4e4e4;background:#fff;"></div>
<svg style="left:844px;top:340px" width="18" height="16" viewBox="0 0 18 16"><path d="M17 4.500H2M5 1L1.500 4.500 5 8M1 11.500H16M13 8l3.500 3.500L13 15" fill="none" stroke="#c3dcf2" stroke-width="1.300"/></svg>
<div class="ab" style="left:866px;top:337px;width:22px;height:22px;"></div>
<svg style="left:869px;top:341px" width="17" height="14" viewBox="0 0 17 14"><path d="M9.500 0.500L16.500 6.200 9.500 11.800V8.300Q3.500 7.800 0.500 13.500 1 4.800 9.500 4z" fill="#1976c8"/><path d="M9.500 4Q3 4.800 1.300 10.500 4.500 6.800 9.500 7z" fill="#5aa5e6" opacity=".6"/></svg>
<div class="t" style="top:339.0px;font-size:12px;line-height:18px;color:#1c1c1c;left:896px;transform:scaleX(1.006);transform-origin:0 50%;">Chariots élévateurs</div>
<div class="t" style="top:369.0px;font-size:12px;line-height:18px;color:#1c1c1c;right:1251.5px;transform:scaleX(0.879);transform-origin:100% 50%;">Famille</div>
<div class="in" style="left:677px;top:367px;width:160px;height:22px"></div>
<div class="t" style="top:369.5px;font-size:11px;line-height:17px;color:#111;font-weight:bold;left:685px;transform:scaleX(0.976);transform-origin:0 50%;">CHAR</div>
<div class="ab" style="left:840px;top:367px;width:22px;height:22px;"></div>
<svg style="left:843px;top:371px" width="17" height="14" viewBox="0 0 17 14"><path d="M9.500 0.500L16.500 6.200 9.500 11.800V8.300Q3.500 7.800 0.500 13.500 1 4.800 9.500 4z" fill="#1976c8"/><path d="M9.500 4Q3 4.800 1.300 10.500 4.500 6.800 9.500 7z" fill="#5aa5e6" opacity=".6"/></svg>
<div class="t" style="top:369.5px;font-size:11px;line-height:17px;color:#111;font-weight:bold;left:873px;transform:scaleX(1.026);transform-origin:0 50%;">Chariot</div>
<div class="t" style="top:399.0px;font-size:12px;line-height:18px;color:#1c1c1c;right:1251.5px;transform:scaleX(0.939);transform-origin:100% 50%;">Sous-famille</div>
<div class="in" style="left:677px;top:397px;width:160px;height:22px"></div>
<div class="t" style="top:399.5px;font-size:11px;line-height:17px;color:#111;font-weight:bold;left:685px;transform:scaleX(0.852);transform-origin:0 50%;">ELEC</div>
<div class="ab" style="left:840px;top:397px;width:22px;height:22px;"></div>
<svg style="left:843px;top:401px" width="17" height="14" viewBox="0 0 17 14"><path d="M9.500 0.500L16.500 6.200 9.500 11.800V8.300Q3.500 7.800 0.500 13.500 1 4.800 9.500 4z" fill="#1976c8"/><path d="M9.500 4Q3 4.800 1.300 10.500 4.500 6.800 9.500 7z" fill="#5aa5e6" opacity=".6"/></svg>
<div class="t" style="top:399.5px;font-size:11px;line-height:17px;color:#111;font-weight:bold;left:873px;transform:scaleX(1.015);transform-origin:0 50%;">Electrique</div>
<div class="t" style="top:429.0px;font-size:12px;line-height:18px;color:#1c1c1c;right:1251.5px;">Criticité</div>
<div class="in" style="left:677px;top:427px;width:160px;height:22px"></div>
<div class="t" style="top:429.5px;font-size:11px;line-height:17px;color:#111;font-weight:bold;left:685px;">2</div>
<div class="ab" style="left:840px;top:427px;width:22px;height:22px;"></div>
<svg style="left:843px;top:431px" width="17" height="14" viewBox="0 0 17 14"><path d="M9.500 0.500L16.500 6.200 9.500 11.800V8.300Q3.500 7.800 0.500 13.500 1 4.800 9.500 4z" fill="#1976c8"/><path d="M9.500 4Q3 4.800 1.300 10.500 4.500 6.800 9.500 7z" fill="#5aa5e6" opacity=".6"/></svg>
<div class="t" style="top:429.5px;font-size:11px;line-height:17px;color:#111;font-weight:bold;left:873px;transform:scaleX(1.019);transform-origin:0 50%;">Haute Criticité</div>
<div class="t" style="top:459.0px;font-size:12px;line-height:18px;color:#1c1c1c;right:1251.5px;transform:scaleX(0.944);transform-origin:100% 50%;">Classe horaire</div>
<div class="in" style="left:677px;top:457px;width:160px;height:22px"></div>
<div class="t" style="top:459.5px;font-size:11px;line-height:17px;color:#111;font-weight:bold;left:685px;transform:scaleX(0.996);transform-origin:0 50%;">C2</div>
<div class="ab" style="left:840px;top:457px;width:22px;height:22px;"></div>
<svg style="left:843px;top:461px" width="17" height="14" viewBox="0 0 17 14"><path d="M9.500 0.500L16.500 6.200 9.500 11.800V8.300Q3.500 7.800 0.500 13.500 1 4.800 9.500 4z" fill="#1976c8"/><path d="M9.500 4Q3 4.800 1.300 10.500 4.500 6.800 9.500 7z" fill="#5aa5e6" opacity=".6"/></svg>
<div class="t" style="top:459.5px;font-size:11px;line-height:17px;color:#111;font-weight:bold;left:873px;transform:scaleX(1.025);transform-origin:0 50%;">6/7 jours - 13 heures</div>
<div class="t" style="top:489.0px;font-size:12px;line-height:18px;color:#1c1c1c;right:1251.5px;transform:scaleX(0.971);transform-origin:100% 50%;">Responsable</div>
<div class="in" style="left:677px;top:487px;width:160px;height:22px"></div>
<div class="t" style="top:489.5px;font-size:11px;line-height:17px;color:#111;font-weight:bold;left:685px;transform:scaleX(0.981);transform-origin:0 50%;">100</div>
<div class="ab" style="left:840px;top:487px;width:22px;height:22px;"></div>
<svg style="left:843px;top:491px" width="17" height="14" viewBox="0 0 17 14"><path d="M9.500 0.500L16.500 6.200 9.500 11.800V8.300Q3.500 7.800 0.500 13.500 1 4.800 9.500 4z" fill="#1976c8"/><path d="M9.500 4Q3 4.800 1.300 10.500 4.500 6.800 9.500 7z" fill="#5aa5e6" opacity=".6"/></svg>
<div class="t" style="top:489.5px;font-size:11px;line-height:17px;color:#111;font-weight:bold;left:873px;transform:scaleX(0.990);transform-origin:0 50%;">MARTIN David</div>
<div class="t" style="top:519.0px;font-size:12px;line-height:18px;color:#1c1c1c;right:1251.5px;transform:scaleX(0.951);transform-origin:100% 50%;">Destinataire D.I. / B.T.</div>
<div class="in" style="left:677px;top:517px;width:160px;height:22px"></div>
<div class="t" style="top:519.5px;font-size:11px;line-height:17px;color:#111;font-weight:bold;left:685px;transform:scaleX(0.981);transform-origin:0 50%;">100</div>
<div class="ab" style="left:840px;top:517px;width:22px;height:22px;"></div>
<svg style="left:843px;top:521px" width="17" height="14" viewBox="0 0 17 14"><path d="M9.500 0.500L16.500 6.200 9.500 11.800V8.300Q3.500 7.800 0.500 13.500 1 4.800 9.500 4z" fill="#1976c8"/><path d="M9.500 4Q3 4.800 1.300 10.500 4.500 6.800 9.500 7z" fill="#5aa5e6" opacity=".6"/></svg>
<div class="t" style="top:519.5px;font-size:11px;line-height:17px;color:#111;font-weight:bold;left:873px;transform:scaleX(0.935);transform-origin:0 50%;">MARTIN</div>
<div class="t" style="top:549.0px;font-size:12px;line-height:18px;color:#1c1c1c;right:1251.5px;transform:scaleX(0.868);transform-origin:100% 50%;">Fournisseur</div>
<div class="in" style="left:677px;top:547px;width:160px;height:22px"></div>
<div class="t" style="top:549.5px;font-size:11px;line-height:17px;color:#111;font-weight:bold;left:685px;transform:scaleX(0.981);transform-origin:0 50%;">10002</div>
<div class="ab" style="left:840px;top:547px;width:22px;height:22px;"></div>
<svg style="left:843px;top:551px" width="17" height="14" viewBox="0 0 17 14"><path d="M9.500 0.500L16.500 6.200 9.500 11.800V8.300Q3.500 7.800 0.500 13.500 1 4.800 9.500 4z" fill="#1976c8"/><path d="M9.500 4Q3 4.800 1.300 10.500 4.500 6.800 9.500 7z" fill="#5aa5e6" opacity=".6"/></svg>
<div class="t" style="top:549.5px;font-size:11px;line-height:17px;color:#111;font-weight:bold;left:873px;transform:scaleX(0.938);transform-origin:0 50%;">ARCADES</div>
<div class="t" style="top:579.0px;font-size:12px;line-height:18px;color:#1c1c1c;right:1251.5px;transform:scaleX(1.032);transform-origin:100% 50%;">Marque</div>
<div class="in" style="left:677px;top:577px;width:160px;height:22px"></div>
<div class="t" style="top:579.5px;font-size:11px;line-height:17px;color:#111;font-weight:bold;left:685px;transform:scaleX(0.958);transform-origin:0 50%;">RAPIDO</div>
<div class="ab" style="left:840px;top:577px;width:22px;height:22px;"></div>
<svg style="left:843px;top:581px" width="17" height="14" viewBox="0 0 17 14"><path d="M9.500 0.500L16.500 6.200 9.500 11.800V8.300Q3.500 7.800 0.500 13.500 1 4.800 9.500 4z" fill="#1976c8"/><path d="M9.500 4Q3 4.800 1.300 10.500 4.500 6.800 9.500 7z" fill="#5aa5e6" opacity=".6"/></svg>
<div class="t" style="top:579.5px;font-size:11px;line-height:17px;color:#111;font-weight:bold;left:873px;transform:scaleX(0.958);transform-origin:0 50%;">RAPIDO</div>
<div class="t" style="top:609.0px;font-size:12px;line-height:18px;color:#1c1c1c;right:1251.5px;transform:scaleX(0.958);transform-origin:100% 50%;">Numéro de série</div>
<div class="in" style="left:677px;top:607px;width:160px;height:22px"></div>
<div class="t" style="top:609.5px;font-size:11px;line-height:17px;color:#111;font-weight:bold;left:685px;">HUO1215454</div>
<div class="t" style="top:639.0px;font-size:12px;line-height:18px;color:#1c1c1c;right:1251.5px;transform:scaleX(1.019);transform-origin:100% 50%;">Numéro d&#x27;inventaire</div>
<div class="in" style="left:677px;top:637px;width:160px;height:22px"></div>
<div class="t" style="top:639.5px;font-size:11px;line-height:17px;color:#111;font-weight:bold;left:685px;transform:scaleX(0.981);transform-origin:0 50%;">452</div>
<div class="t" style="top:669.0px;font-size:12px;line-height:18px;color:#1c1c1c;right:1251.5px;transform:scaleX(1.027);transform-origin:100% 50%;">Prix d&#x27;achat</div>
<div class="in" style="left:677px;top:667px;width:160px;height:22px"></div>
<div class="t" style="top:669.5px;font-size:11px;line-height:17px;color:#111;font-weight:bold;letter-spacing:0.12px;left:685px;transform:scaleX(1.060);transform-origin:0 50%;">45 000,00</div>
<div class="t" style="top:669.5px;font-size:11px;line-height:17px;color:#1c1c1c;left:848px;transform:scaleX(0.904);transform-origin:0 50%;">EUR</div>
<div class="t" style="top:699.0px;font-size:12px;line-height:18px;color:#1c1c1c;letter-spacing:0.16px;right:1251.3px;transform:scaleX(1.060);transform-origin:100% 50%;">Date d&#x27;achat</div>
<div class="in" style="left:677px;top:697px;width:160px;height:22px"></div>
<div class="t" style="top:699.5px;font-size:11px;line-height:17px;color:#111;font-weight:bold;letter-spacing:0.16px;left:685px;transform:scaleX(1.060);transform-origin:0 50%;">04/05/2016</div>
<svg style="left:816px;top:698px" width="18" height="19" viewBox="0 0 18 19"><rect x="0.500" y="3" width="17" height="15.500" rx="1" fill="#a6cdee"/><g fill="none" stroke="#a6cdee" stroke-width="1.300"><path d="M3.500 4V0.700h2.800V4M11.500 4V0.700h2.800V4"/></g><text x="9" y="16" font-size="10" font-weight="bold" fill="#fff" text-anchor="middle" font-family="Liberation Sans,sans-serif">15</text></svg>
<div class="t" style="top:729.0px;font-size:12px;line-height:18px;color:#1c1c1c;right:1251.5px;transform:scaleX(1.024);transform-origin:100% 50%;">Date limite de garantie</div>
<div class="in" style="left:677px;top:727px;width:160px;height:22px"></div>
<div class="t" style="top:729.5px;font-size:11px;line-height:17px;color:#111;font-weight:bold;letter-spacing:0.16px;left:685px;transform:scaleX(1.060);transform-origin:0 50%;">19/06/2019</div>
<svg style="left:816px;top:728px" width="18" height="19" viewBox="0 0 18 19"><rect x="0.500" y="3" width="17" height="15.500" rx="1" fill="#a6cdee"/><g fill="none" stroke="#a6cdee" stroke-width="1.300"><path d="M3.500 4V0.700h2.800V4M11.500 4V0.700h2.800V4"/></g><text x="9" y="16" font-size="10" font-weight="bold" fill="#fff" text-anchor="middle" font-family="Liberation Sans,sans-serif">15</text></svg>
<div class="t" style="top:759.0px;font-size:12px;line-height:18px;color:#1c1c1c;right:1251.5px;transform:scaleX(0.994);transform-origin:100% 50%;">Date de mise en service</div>
<div class="in" style="left:677px;top:757px;width:160px;height:22px"></div>
<div class="t" style="top:759.5px;font-size:11px;line-height:17px;color:#111;font-weight:bold;letter-spacing:0.16px;left:685px;transform:scaleX(1.060);transform-origin:0 50%;">19/06/2016</div>
<svg style="left:816px;top:758px" width="18" height="19" viewBox="0 0 18 19"><rect x="0.500" y="3" width="17" height="15.500" rx="1" fill="#a6cdee"/><g fill="none" stroke="#a6cdee" stroke-width="1.300"><path d="M3.500 4V0.700h2.800V4M11.500 4V0.700h2.800V4"/></g><text x="9" y="16" font-size="10" font-weight="bold" fill="#fff" text-anchor="middle" font-family="Liberation Sans,sans-serif">15</text></svg>
<div class="t" style="top:789.0px;font-size:12px;line-height:18px;color:#1c1c1c;right:1251.5px;">Taux horaire</div>
<div class="in" style="left:677px;top:787px;width:160px;height:22px"></div>
<div class="t" style="top:789.5px;font-size:11px;line-height:17px;color:#111;font-weight:bold;left:685px;transform:scaleX(1.017);transform-origin:0 50%;">50,00</div>
<div class="t" style="top:789.5px;font-size:11px;line-height:17px;color:#1c1c1c;left:848px;transform:scaleX(0.904);transform-origin:0 50%;">EUR</div>
<div style="left:677px;top:817.5px;width:13px;height:13px;border:1px solid #c9c9c9;background:#fdfdfd;"></div>
<div class="t" style="top:815.0px;font-size:12px;line-height:18px;color:#cdcdcd;font-weight:bold;left:694px;transform:scaleX(0.958);transform-origin:0 50%;">Hors service</div>
<div class="t" style="top:841.0px;font-size:12px;line-height:18px;color:#1c1c1c;right:1252.5px;transform:scaleX(1.036);transform-origin:100% 50%;">Emplacement</div>
<div class="t" style="top:857.0px;font-size:12px;line-height:18px;color:#1c1c1c;right:1251.5px;transform:scaleX(1.049);transform-origin:100% 50%;">géographique</div>
<div class="t" style="top:849.5px;font-size:11px;line-height:17px;color:#111;font-weight:bold;left:685.5px;transform:scaleX(1.020);transform-origin:0 50%;">Bâtiment Secondaire | Logistique / Transport | Zone de Logistique</div>
<div style="left:677px;top:885.5px;width:13px;height:13px;border:1px solid #c9c9c9;background:#fdfdfd;"></div>
<div class="t" style="top:883.0px;font-size:12px;line-height:18px;color:#d2d2d2;font-weight:bold;left:694px;transform:scaleX(1.018);transform-origin:0 50%;">Saisie de l&#x27;organe obligatoire sur les activités de cet équipement</div>
<div style="left:677px;top:907.5px;width:13px;height:13px;border:1px solid #c9c9c9;background:#fdfdfd;"></div>
<div class="t" style="top:905.0px;font-size:12px;line-height:18px;color:#d2d2d2;font-weight:bold;left:694px;transform:scaleX(1.015);transform-origin:0 50%;">Saisie de valeur du compteur obligatoire à la clôture du B.T.</div>
<div style="left:511.5px;top:926px;width:607.5px;height:28px;background:#2f8bd4;border-radius:2px;"></div>
<div class="t" style="top:931.5px;font-size:11px;line-height:17px;color:#fff;font-weight:bold;left:515.5px;transform:scaleX(0.920);transform-origin:0 50%;">DEMO PERSO EQU_FAMILLES</div>
<div class="t" style="top:153.5px;font-size:11px;line-height:17px;color:#fff;font-weight:bold;left:1146px;">Article AMP-CHAR</div>
<svg style="left:1252.5px;top:153.7px" width="46" height="14" viewBox="0 0 46 14"><path d="M3 5.500H1.200V12.500H9.200V5.500H7.400" fill="none" stroke="#6fb1e4" stroke-width="1.100"/><path d="M5.200 9V1.500M3.200 3.500l2-2.200 2 2.200" fill="none" stroke="#6fb1e4" stroke-width="1.100"/><path d="M26.500 1.200L20.800 7l5.700 5.800" fill="none" stroke="#e8f2fa" stroke-width="1.300"/><path d="M33.5 1.200l11.500 11.500M45.0 1.200L33.5 12.700" fill="none" stroke="#f4f9fd" stroke-width="1.300"/></svg>
<div class="hdr" style="left:1142px;top:175px;width:769px;height:108px"></div>
<div style="left:1144px;top:177px;width:146px;height:95px;background:#e5e5e5;border:2px solid #fff;border-radius:4px;box-shadow:inset 0 0 0 1px #d2d2d2;"></div>
<div style="left:1174px;top:180.5px;width:87px;height:89px;background:#fff;"></div>
<svg style="left:1173px;top:180px" width="89" height="90" viewBox="1173 180 89 90">
<defs><linearGradient id="gl" x1="0" x2="1"><stop offset="0" stop-color="#b9cad8"/><stop offset=".3" stop-color="#f6fafc"/><stop offset=".7" stop-color="#dde8f0"/><stop offset="1" stop-color="#a9bccb"/></linearGradient>
<linearGradient id="mt" x1="0" x2="1"><stop offset="0" stop-color="#6a6a6a"/><stop offset=".4" stop-color="#dcdcdc"/><stop offset=".75" stop-color="#8a8a8a"/><stop offset="1" stop-color="#555"/></linearGradient></defs>
<g filter="url(#bl)"><path d="M1215.700 182.500q1.300-1 2.600 0v7.500h-2.600z" fill="#9fb0bd"/>
<path d="M1209.500 196q0-7 7.500-7t7.500 7V223.500h-15z" fill="url(#gl)"/><rect x="1210" y="193" width="14" height="7" fill="#9cc3de" opacity=".75"/><rect x="1210" y="212" width="14" height="7.500" fill="#9cc3de" opacity=".85"/><rect x="1211.500" y="200.500" width="11" height="11" fill="#f4f8fb" opacity=".8"/><path d="M1216 201v5l3 4-2 3" stroke="#8092a2" stroke-width="1.100" fill="none"/>
<path d="M1210 220h14l-1.500 5h-11z" fill="#7f929f"/><rect x="1212" y="224" width="10" height="5" fill="#b9c2c9"/>
<path d="M1205.300 241.500q0.200-13.500 11.300-13.500t11.300 13.500z" fill="url(#mt)"/><path d="M1209 232h15M1207 236h19" stroke="#555" stroke-width="0.700" opacity=".6"/>
<path d="M1194 242.300l6-0.600 2.500-3.200h29l2.500 3.200 5.600 0.600v1.300h-45.600z" fill="#9a9a9a"/>
<rect x="1205.500" y="243.500" width="22.500" height="4.300" fill="url(#mt)"/><path d="M1207 247.600h19.500l-1.500 3.800h-16.500z" fill="#1c1c1c"/>
<path d="M1209 251v12.500M1224.700 251v12.500" stroke="#6f6f6f" stroke-width="1.600"/></g></svg>
<div class="t" style="top:180.5px;font-size:13px;line-height:19px;color:#f2f2f2;left:1297px;transform:scaleX(0.886);transform-origin:0 50%;">Article</div>
<div style="left:1337.5px;top:180px;width:159px;height:20px;background:#f4f4f4;border-radius:2px;"></div>
<div class="t" style="top:180.5px;font-size:12px;line-height:18px;color:#111;font-weight:bold;left:1345.5px;transform:scaleX(0.918);transform-origin:0 50%;">AMP-CHAR</div>
<div style="left:1501px;top:180px;width:20px;height:20px;background:#fff;"></div>
<svg style="left:1501px;top:180px" width="20" height="20"><circle cx="8.300" cy="8" r="4.700" fill="none" stroke="#1474c4" stroke-width="1.700"/><path d="M11.800 11.500l5.200 5.400" stroke="#1474c4" stroke-width="2.600" stroke-linecap="round"/><path d="M12.300 13.200l3.800 4" stroke="#9cc8ec" stroke-width="0.800"/></svg>
<div style="left:1526px;top:180px;width:20px;height:20px;background:#fff;"></div>
<svg style="left:1526px;top:180px" width="20" height="20"><g fill="none" stroke="#1474c4" stroke-width="1.800"><path d="M14.800 9.500a4.800 4.800 0 0 0-7.600-3.600M5.200 10.500a4.800 4.800 0 0 0 7.600 3.600"/></g><path d="M9.500 3.200l-4 1.300 2.600 3.200zM10.500 16.800l4-1.300-2.600-3.200z" fill="#1474c4"/></svg>
<div class="t" style="top:181.0px;font-size:12px;line-height:18px;color:#f4f4f4;left:1558.5px;transform:scaleX(0.971);transform-origin:0 50%;">Création 19/01/2017 00:00</div>
<div class="t" style="top:181.0px;font-size:12px;line-height:18px;color:#f4f4f4;left:1704.5px;">|</div>
<div class="t" style="top:181.0px;font-size:12px;line-height:18px;color:#f4f4f4;left:1712.5px;transform:scaleX(0.983);transform-origin:0 50%;">Modification 18/02/2019 14:36 DMA</div>
<div class="t" style="top:181.0px;font-size:12px;line-height:18px;color:#f4f4f4;left:1905px;">|</div>
<div class="t" style="top:205.5px;font-size:20px;line-height:26px;color:#3a8ad2;left:1299.5px;transform:scaleX(0.884);transform-origin:0 50%;">AMPOULE POUR CHARIOT ÉLÉVATEUR</div>
<div class="btn" style="left:1298px;top:238px;width:87px;height:30px"></div>
<svg style="left:1298px;top:238px" width="40" height="30" viewBox="0 0 40 30"><path d="M8.800 25l2.100-6.500L25.200 4.800q2.800-1.200 4.600 1.400 1.600 2.400-0.300 4L15.400 23.300zM10.900 18.500l4.500 4.800M23 6.900l4.600 4.800" fill="none" stroke="#d9ebf8" stroke-width="1.200" stroke-linejoin="round"/></svg>
<div class="t" style="top:243.8px;font-size:13px;line-height:19px;color:#fff;font-weight:bold;left:1333px;transform:scaleX(0.930);transform-origin:0 50%;text-shadow:0 0 2px rgba(0,30,70,.7);">Modifier</div>
<div class="btn" style="left:1397px;top:238px;width:107px;height:30px"></div>
<svg style="left:1397px;top:238px" width="40" height="30" viewBox="0 0 40 30"><circle cx="15.500" cy="11.500" r="6.600" fill="none" stroke="#d9ebf8" stroke-width="1.200"/><path d="M20.300 16.500l8.300 8M12 11.500h7M15.500 8v7" fill="none" stroke="#d9ebf8" stroke-width="1.200"/></svg>
<div class="t" style="top:243.8px;font-size:13px;line-height:19px;color:#fff;font-weight:bold;left:1432.5px;transform:scaleX(0.937);transform-origin:0 50%;text-shadow:0 0 2px rgba(0,30,70,.7);">Rechercher</div>
<div class="btn" style="left:1516px;top:238px;width:79px;height:30px"></div>
<svg style="left:1516px;top:238px" width="40" height="30" viewBox="0 0 40 30"><g fill="none" stroke="#d9ebf8" stroke-width="1.200"><path d="M12 26.500q0 1.500 1.500 1.500h16q1.500 0 1.500-1.500V6.500q0-1.500-1.500-1.500"/><rect x="7" y="1.800" width="19.500" height="23.500" rx="1.500" fill="#0072c6"/><path d="M11 7h11M11 10.500h11M11 14h11M11 17.500h6"/></g></svg>
<div class="t" style="top:243.8px;font-size:13px;line-height:19px;color:#fff;font-weight:bold;left:1551px;transform:scaleX(0.972);transform-origin:0 50%;text-shadow:0 0 2px rgba(0,30,70,.7);">Copier</div>
<div class="btn" style="left:1607px;top:238px;width:85px;height:30px"></div>
<svg style="left:1607px;top:238px" width="40" height="30" viewBox="0 0 40 30"><path d="M8.500 4.500l20 20M28.500 4.500l-20 20" fill="none" stroke="#d9ebf8" stroke-width="1.200"/></svg>
<div class="t" style="top:243.8px;font-size:13px;line-height:19px;color:#fff;font-weight:bold;left:1642.5px;transform:scaleX(0.906);transform-origin:0 50%;text-shadow:0 0 2px rgba(0,30,70,.7);">Annuler</div>
<div class="nav" style="left:1142px;top:317px;width:166px;height:714px"></div>
<div class="t" style="top:291.0px;font-size:13px;line-height:19px;color:#0072c6;left:1152.5px;transform:scaleX(1.016);transform-origin:0 50%;-webkit-text-stroke:0.300px #0072c6;">Général</div>
<div class="t" style="top:326.0px;font-size:13px;line-height:19px;color:#222;left:1152.5px;transform:scaleX(0.948);transform-origin:0 50%;-webkit-text-stroke:0.500px #222;">Stocks</div>
<div class="t" style="top:361.0px;font-size:13px;line-height:19px;color:#222;left:1152.5px;transform:scaleX(1.012);transform-origin:0 50%;-webkit-text-stroke:0.500px #222;">Commentaires</div>
<div class="t" style="top:396.0px;font-size:13px;line-height:19px;color:#222;left:1152.5px;transform:scaleX(0.986);transform-origin:0 50%;-webkit-text-stroke:0.500px #222;">Consignes sécurité</div>
<div class="t" style="top:431.0px;font-size:13px;line-height:19px;color:#222;left:1152.5px;transform:scaleX(0.993);transform-origin:0 50%;-webkit-text-stroke:0.500px #222;">Documents joints</div>
<div class="t" style="top:466.0px;font-size:13px;line-height:19px;color:#222;left:1152.5px;transform:scaleX(1.005);transform-origin:0 50%;-webkit-text-stroke:0.500px #222;">Gammes</div>
<div class="t" style="top:501.0px;font-size:13px;line-height:19px;color:#222;left:1152.5px;transform:scaleX(0.918);transform-origin:0 50%;-webkit-text-stroke:0.500px #222;">Fournisseurs</div>
<div class="t" style="top:536.0px;font-size:13px;line-height:19px;color:#222;left:1152.5px;transform:scaleX(1.042);transform-origin:0 50%;-webkit-text-stroke:0.500px #222;">Article de remplacement</div>
<div class="t" style="top:571.0px;font-size:13px;line-height:19px;color:#222;left:1152.5px;transform:scaleX(0.988);transform-origin:0 50%;-webkit-text-stroke:0.500px #222;">Équipements</div>
<div class="t" style="top:606.0px;font-size:13px;line-height:19px;color:#222;left:1152.5px;-webkit-text-stroke:0.500px #222;">Organes</div>
<div class="t" style="top:641.0px;font-size:13px;line-height:19px;color:#222;left:1152.5px;transform:scaleX(0.960);transform-origin:0 50%;-webkit-text-stroke:0.500px #222;">B.T. non clôturés</div>
<div class="t" style="top:676.0px;font-size:13px;line-height:19px;color:#222;left:1152.5px;transform:scaleX(1.018);transform-origin:0 50%;-webkit-text-stroke:0.500px #222;">Commandes</div>
<div class="t" style="top:301.0px;font-size:12px;line-height:18px;color:#1c1c1c;right:442.5px;transform:scaleX(0.978);transform-origin:100% 50%;">Désignation</div>
<div class="in" style="left:1486px;top:299px;width:400px;height:22px;border-right:none;border-radius:2px 0 0 2px"></div>
<div class="t" style="top:301.5px;font-size:11px;line-height:17px;color:#111;font-weight:bold;left:1494px;transform:scaleX(1.026);transform-origin:0 50%;">Ampoule pour chariot élévateur</div>
<div class="t" style="top:331.0px;font-size:12px;line-height:18px;color:#1c1c1c;right:442.5px;transform:scaleX(0.879);transform-origin:100% 50%;">Famille</div>
<div class="in" style="left:1486px;top:329px;width:160px;height:22px"></div>
<div class="t" style="top:331.5px;font-size:11px;line-height:17px;color:#111;font-weight:bold;left:1494px;transform:scaleX(0.879);transform-origin:0 50%;">ECLAI</div>
<div class="ab" style="left:1649px;top:329px;width:22px;height:22px;"></div>
<svg style="left:1652px;top:333px" width="17" height="14" viewBox="0 0 17 14"><path d="M9.500 0.500L16.500 6.200 9.500 11.800V8.300Q3.500 7.800 0.500 13.500 1 4.800 9.500 4z" fill="#1976c8"/><path d="M9.500 4Q3 4.800 1.300 10.500 4.500 6.800 9.500 7z" fill="#5aa5e6" opacity=".6"/></svg>
<div class="t" style="top:331.5px;font-size:11px;line-height:17px;color:#111;font-weight:bold;left:1682.5px;transform:scaleX(1.022);transform-origin:0 50%;">Eclairage</div>
<div class="t" style="top:361.0px;font-size:12px;line-height:18px;color:#1c1c1c;right:442.5px;transform:scaleX(0.939);transform-origin:100% 50%;">Sous-famille</div>
<div class="in" style="left:1486px;top:359px;width:160px;height:22px"></div>
<div class="t" style="top:361.5px;font-size:11px;line-height:17px;color:#111;font-weight:bold;left:1494px;transform:scaleX(0.931);transform-origin:0 50%;">LAMP</div>
<div class="ab" style="left:1649px;top:359px;width:22px;height:22px;"></div>
<svg style="left:1652px;top:363px" width="17" height="14" viewBox="0 0 17 14"><path d="M9.500 0.500L16.500 6.200 9.500 11.800V8.300Q3.500 7.800 0.500 13.500 1 4.800 9.500 4z" fill="#1976c8"/><path d="M9.500 4Q3 4.800 1.300 10.500 4.500 6.800 9.500 7z" fill="#5aa5e6" opacity=".6"/></svg>
<div class="t" style="top:361.5px;font-size:11px;line-height:17px;color:#111;font-weight:bold;left:1682.5px;transform:scaleX(0.938);transform-origin:0 50%;">Lampes</div>
<div class="t" style="top:391.0px;font-size:12px;line-height:18px;color:#1c1c1c;right:442.5px;transform:scaleX(0.928);transform-origin:100% 50%;">Unité</div>
<div class="in" style="left:1486px;top:389px;width:160px;height:22px"></div>
<div class="t" style="top:391.5px;font-size:11px;line-height:17px;color:#111;font-weight:bold;left:1494px;transform:scaleX(0.881);transform-origin:0 50%;">UN</div>
<div class="ab" style="left:1649px;top:389px;width:22px;height:22px;"></div>
<svg style="left:1652px;top:393px" width="17" height="14" viewBox="0 0 17 14"><path d="M9.500 0.500L16.500 6.200 9.500 11.800V8.300Q3.500 7.800 0.500 13.500 1 4.800 9.500 4z" fill="#1976c8"/><path d="M9.500 4Q3 4.800 1.300 10.500 4.500 6.800 9.500 7z" fill="#5aa5e6" opacity=".6"/></svg>
<div class="t" style="top:391.5px;font-size:11px;line-height:17px;color:#111;font-weight:bold;left:1682.5px;transform:scaleX(0.946);transform-origin:0 50%;">Unité</div>
<div class="t" style="top:421.0px;font-size:12px;line-height:18px;color:#1c1c1c;letter-spacing:0.25px;right:442.2px;transform:scaleX(1.060);transform-origin:100% 50%;">Code tva</div>
<div class="in" style="left:1486px;top:419px;width:160px;height:22px"></div>
<div class="t" style="top:421.5px;font-size:11px;line-height:17px;color:#111;font-weight:bold;left:1494px;">1</div>
<div class="ab" style="left:1649px;top:419px;width:22px;height:22px;"></div>
<svg style="left:1652px;top:423px" width="17" height="14" viewBox="0 0 17 14"><path d="M9.500 0.500L16.500 6.200 9.500 11.800V8.300Q3.500 7.800 0.500 13.500 1 4.800 9.500 4z" fill="#1976c8"/><path d="M9.500 4Q3 4.800 1.300 10.500 4.500 6.800 9.500 7z" fill="#5aa5e6" opacity=".6"/></svg>
<div class="t" style="top:421.5px;font-size:11px;line-height:17px;color:#111;font-weight:bold;left:1682.5px;transform:scaleX(0.981);transform-origin:0 50%;">Taux 20 %</div>
<div class="t" style="top:451.0px;font-size:12px;line-height:18px;color:#1c1c1c;right:442.5px;">Prix standard</div>
<div class="in" style="left:1486px;top:449px;width:160px;height:22px"></div>
<div class="t" style="top:451.5px;font-size:11px;line-height:17px;color:#111;font-weight:bold;left:1494px;transform:scaleX(1.017);transform-origin:0 50%;">45,00</div>
<div class="t" style="top:451.5px;font-size:11px;line-height:17px;color:#1c1c1c;left:1657px;transform:scaleX(0.883);transform-origin:0 50%;">EUR</div>
<div class="t" style="top:481.0px;font-size:12px;line-height:18px;color:#1c1c1c;right:442.5px;transform:scaleX(1.006);transform-origin:100% 50%;">Prix dernière commande</div>
<div class="in" style="left:1486px;top:479px;width:160px;height:22px"></div>
<div class="t" style="top:481.5px;font-size:11px;line-height:17px;color:#111;font-weight:bold;left:1494px;transform:scaleX(1.017);transform-origin:0 50%;">40,00</div>
<div class="t" style="top:481.5px;font-size:11px;line-height:17px;color:#1c1c1c;left:1657px;transform:scaleX(0.883);transform-origin:0 50%;">EUR</div>
<div class="t" style="top:511.0px;font-size:12px;line-height:18px;color:#1c1c1c;right:442.5px;transform:scaleX(0.990);transform-origin:100% 50%;">Délai de livraison</div>
<div class="in" style="left:1486px;top:509px;width:160px;height:22px"></div>
<div class="t" style="top:511.5px;font-size:11px;line-height:17px;color:#111;font-weight:bold;left:1494px;transform:scaleX(0.899);transform-origin:0 50%;">10</div>
<div class="t" style="top:511.5px;font-size:11px;line-height:17px;color:#1c1c1c;left:1657px;transform:scaleX(0.986);transform-origin:0 50%;">jours</div>
<div class="t" style="top:541.0px;font-size:12px;line-height:18px;color:#1c1c1c;right:442.5px;transform:scaleX(1.022);transform-origin:100% 50%;">Date d&#x27;obsolescence</div>
<div class="in" style="left:1486px;top:539px;width:160px;height:22px"></div>
<svg style="left:1626px;top:540px" width="18" height="19" viewBox="0 0 18 19"><rect x="0.500" y="3" width="17" height="15.500" rx="1" fill="#a6cdee"/><g fill="none" stroke="#a6cdee" stroke-width="1.300"><path d="M3.500 4V0.700h2.800V4M11.500 4V0.700h2.800V4"/></g><text x="9" y="16" font-size="10" font-weight="bold" fill="#fff" text-anchor="middle" font-family="Liberation Sans,sans-serif">15</text></svg>
<div style="left:1486.5px;top:570.0px;width:13px;height:13px;border:1px solid #c9c9c9;background:#fdfdfd;"></div>
<svg style="left:1486.5px;top:570.0px" width="13" height="13"><path d="M2.500 6.500l3 3.500 5.500-8" fill="none" stroke="#c0c0c0" stroke-width="1.300"/></svg>
<div class="t" style="top:567.0px;font-size:12px;line-height:18px;color:#b0b0b0;font-weight:bold;left:1503.5px;transform:scaleX(0.978);transform-origin:0 50%;">Stocké</div>
<div class="t" style="top:593.0px;font-size:12px;line-height:18px;color:#1c1c1c;right:442.5px;transform:scaleX(1.029);transform-origin:100% 50%;">Quantité Stock (globale)</div>
<div class="in" style="left:1486px;top:591px;width:160px;height:22px"></div>
<div class="t" style="top:593.5px;font-size:11px;line-height:17px;color:#111;font-weight:bold;left:1494px;">5</div>
<div class="t" style="top:593.5px;font-size:11px;line-height:17px;color:#1c1c1c;left:1657px;transform:scaleX(0.944);transform-origin:0 50%;">UN</div>
<div class="t" style="top:623.0px;font-size:12px;line-height:18px;color:#1c1c1c;right:442.5px;transform:scaleX(1.010);transform-origin:100% 50%;">P.M.P Moyen</div>
<div class="in" style="left:1486px;top:621px;width:160px;height:22px"></div>
<div class="t" style="top:623.5px;font-size:11px;line-height:17px;color:#111;font-weight:bold;left:1494px;transform:scaleX(1.017);transform-origin:0 50%;">40,60</div>
<div class="t" style="top:623.5px;font-size:11px;line-height:17px;color:#1c1c1c;left:1657px;transform:scaleX(0.883);transform-origin:0 50%;">EUR</div>
<div style="left:1320px;top:656.5px;width:562px;height:149.5px;border:1px solid #d4d4d4;border-right:none;"></div>
<div class="t" style="left:1329px;top:647.5px;height:18px;background:#fff;width:159.5px"></div>
<div class="t" style="top:647.5px;font-size:12px;line-height:18px;color:#1a78c8;font-weight:bold;left:1334.5px;transform:scaleX(1.022);transform-origin:0 50%;text-decoration:underline;text-underline-offset:2px;">Fiche de stock principale</div>
<div class="t" style="top:680.0px;font-size:12px;line-height:18px;color:#1c1c1c;right:429.0px;transform:scaleX(1.039);transform-origin:100% 50%;">Magasin principal</div>
<div class="in" style="left:1499px;top:678px;width:160px;height:22px"></div>
<div class="t" style="top:680.5px;font-size:11px;line-height:17px;color:#111;font-weight:bold;left:1507px;transform:scaleX(0.916);transform-origin:0 50%;">M1</div>
<div class="ab" style="left:1662px;top:678px;width:22px;height:22px;"></div>
<svg style="left:1665px;top:682px" width="17" height="14" viewBox="0 0 17 14"><path d="M9.500 0.500L16.500 6.200 9.500 11.800V8.300Q3.500 7.800 0.500 13.500 1 4.800 9.500 4z" fill="#1976c8"/><path d="M9.500 4Q3 4.800 1.300 10.500 4.500 6.800 9.500 7z" fill="#5aa5e6" opacity=".6"/></svg>
<div class="t" style="top:680.5px;font-size:11px;line-height:17px;color:#111;font-weight:bold;left:1695px;transform:scaleX(1.044);transform-origin:0 50%;">Magasin principal</div>
<div class="t" style="top:710.0px;font-size:12px;line-height:18px;color:#1c1c1c;right:429.0px;transform:scaleX(1.019);transform-origin:100% 50%;">Emplacement Principal</div>
<div class="in" style="left:1499px;top:708px;width:160px;height:22px"></div>
<div class="t" style="top:710.5px;font-size:11px;line-height:17px;color:#111;font-weight:bold;left:1507px;transform:scaleX(1.057);transform-origin:0 50%;">A-10-06</div>
<div class="t" style="top:740.0px;font-size:12px;line-height:18px;color:#1c1c1c;right:429.0px;transform:scaleX(1.029);transform-origin:100% 50%;">Quantité Magasin Principal</div>
<div class="in" style="left:1499px;top:738px;width:160px;height:22px"></div>
<div class="t" style="top:740.5px;font-size:11px;line-height:17px;color:#111;font-weight:bold;left:1507px;">5</div>
<div class="t" style="top:740.5px;font-size:11px;line-height:17px;color:#1c1c1c;left:1670.5px;transform:scaleX(0.944);transform-origin:0 50%;">UN</div>
<div class="t" style="top:770.0px;font-size:12px;line-height:18px;color:#1c1c1c;right:429.0px;transform:scaleX(1.023);transform-origin:100% 50%;">P.M.P Magasin principal</div>
<div class="in" style="left:1499px;top:768px;width:160px;height:22px"></div>
<div class="t" style="top:770.5px;font-size:11px;line-height:17px;color:#111;font-weight:bold;left:1507px;transform:scaleX(1.017);transform-origin:0 50%;">40,60</div>
<div class="t" style="top:770.5px;font-size:11px;line-height:17px;color:#1c1c1c;left:1670.5px;transform:scaleX(0.883);transform-origin:0 50%;">EUR</div>
<div style="left:1320px;top:815.5px;width:562px;height:119.0px;border:1px solid #d4d4d4;border-right:none;"></div>
<div class="t" style="left:1329px;top:806.5px;height:18px;background:#fff;width:96.5px"></div>
<div class="t" style="top:806.5px;font-size:12px;line-height:18px;color:#1a78c8;font-weight:bold;left:1334.5px;transform:scaleX(0.978);transform-origin:0 50%;text-decoration:underline;text-underline-offset:2px;">Infos quantités</div>
<div class="t" style="top:839.0px;font-size:12px;line-height:18px;color:#1c1c1c;right:429.0px;transform:scaleX(1.056);transform-origin:100% 50%;">Quantité en Commande</div>
<div class="in" style="left:1499px;top:837px;width:160px;height:22px"></div>
<div class="t" style="top:839.5px;font-size:11px;line-height:17px;color:#111;font-weight:bold;left:1507px;transform:scaleX(1.028);transform-origin:0 50%;">0,00</div>
<div class="t" style="top:839.5px;font-size:11px;line-height:17px;color:#1c1c1c;left:1670.5px;transform:scaleX(0.944);transform-origin:0 50%;">UN</div>
<div class="t" style="top:869.0px;font-size:12px;line-height:18px;color:#1c1c1c;right:429.0px;transform:scaleX(1.014);transform-origin:100% 50%;">Quantité en D.A.</div>
<div class="in" style="left:1499px;top:867px;width:160px;height:22px"></div>
<div class="t" style="top:869.5px;font-size:11px;line-height:17px;color:#111;font-weight:bold;left:1507px;transform:scaleX(1.028);transform-origin:0 50%;">0,00</div>
<div class="t" style="top:869.5px;font-size:11px;line-height:17px;color:#1c1c1c;left:1670.5px;transform:scaleX(0.944);transform-origin:0 50%;">UN</div>
<div class="t" style="top:899.0px;font-size:12px;line-height:18px;color:#1c1c1c;right:429.0px;transform:scaleX(1.018);transform-origin:100% 50%;">Quantité suggérée</div>
<div class="in" style="left:1499px;top:897px;width:160px;height:22px"></div>
<div class="t" style="top:899.5px;font-size:11px;line-height:17px;color:#111;font-weight:bold;left:1507px;transform:scaleX(1.028);transform-origin:0 50%;">0,00</div>
<div class="t" style="top:899.5px;font-size:11px;line-height:17px;color:#1c1c1c;left:1670.5px;transform:scaleX(0.944);transform-origin:0 50%;">UN</div>
<div style="left:1320px;top:944.5px;width:562px;height:57.5px;border:1px solid #d4d4d4;border-right:none;border-bottom:none;"></div>
<div class="t" style="left:1329px;top:935.5px;height:18px;background:#fff;width:140px"></div>
<div class="t" style="top:935.5px;font-size:12px;line-height:18px;color:#1a78c8;font-weight:bold;left:1334.5px;transform:scaleX(1.008);transform-origin:0 50%;text-decoration:underline;text-underline-offset:2px;">Réapprovisionnement</div>
<div class="t" style="top:968.0px;font-size:12px;line-height:18px;color:#1c1c1c;right:429.0px;transform:scaleX(0.988);transform-origin:100% 50%;">Stock maxi</div>
<div class="in" style="left:1499px;top:966px;width:160px;height:22px"></div>
<div class="t" style="top:968.5px;font-size:11px;line-height:17px;color:#1c1c1c;left:1672.5px;transform:scaleX(0.944);transform-origin:0 50%;">UN</div>
<div class="in" style="left:1499px;top:996px;width:160px;height:8px;border-bottom:none;border-radius:2px 2px 0 0"></div>
<div style="left:1883px;top:295px;width:16px;height:723px;background:#f0f0f0;"></div>
<div style="left:1320px;top:1002px;width:579px;height:16px;background:#f0f0f0;"></div>
<div style="left:1883px;top:312.5px;width:16px;height:451.5px;background:#c1c1c1;"></div>
<div style="left:1337px;top:1002px;width:472px;height:16px;background:#c1c1c1;"></div>
<svg style="left:1883px;top:295px" width="16" height="707"><path d="M4.500 10.500l3.500-3.500 3.500 3.500M4.500 695.500l3.500 3.500 3.500-3.500" fill="none" stroke="#555" stroke-width="1.300"/></svg>
<svg style="left:1320px;top:1002px" width="579" height="16"><path d="M11 4.500L7.500 8l3.500 3.500M551.500 4.500l3.500 3.500-3.500 3.500" fill="none" stroke="#555" stroke-width="1.300"/></svg>
</body></html>
